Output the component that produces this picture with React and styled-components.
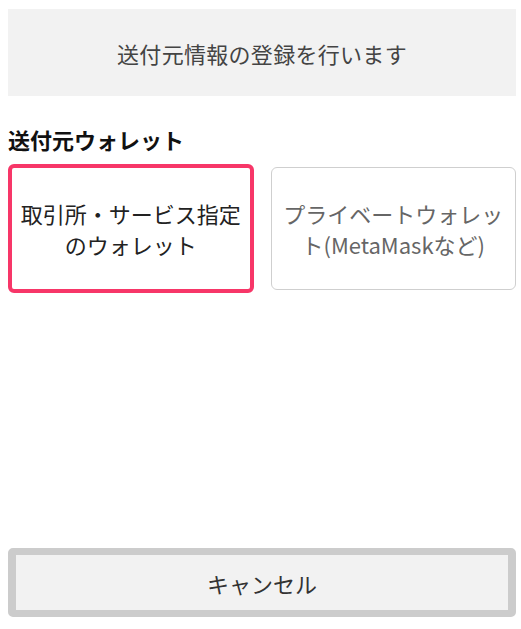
import React from "react";
import styled, { createGlobalStyle } from "styled-components";

const GlobalStyle = createGlobalStyle`
  html, body { margin: 0; padding: 0; background: #ffffff; }
  body { font-family: "Noto Sans CJK JP", "Noto Sans", sans-serif; }
`;

const Page = styled.div`
  min-height: 629px;
  box-sizing: border-box;
  padding: 9px 5px 12px 8px;
  display: flex;
  flex-direction: column;
`;

const Banner = styled.div`
  height: 87px;
  background: #f2f2f2;
  display: flex;
  align-items: center;
  justify-content: center;
  font-size: 22px;
  color: #444444;
  letter-spacing: 0.3px;
`;

const Heading = styled.h2`
  margin: 28px 0 10px;
  font-size: 22px;
  line-height: 30px;
  font-weight: 700;
  color: #111111;
`;

const Options = styled.div`
  display: grid;
  grid-template-columns: 1fr 1fr;
  column-gap: 17px;
  align-items: center;
`;

const Option = styled.button`
  box-sizing: border-box;
  height: ${(p) => (p.$selected ? 129 : 123)}px;
  border: ${(p) => (p.$selected ? "4px solid #f73668" : "1px solid #cfcfcf")};
  border-radius: 6px;
  background: #ffffff;
  color: ${(p) => (p.$selected ? "#222222" : "#666666")};
  font-family: inherit;
  font-size: 22px;
  line-height: 31px;
  white-space: nowrap;
  padding: 0;
  display: flex;
  align-items: center;
  justify-content: center;
  text-align: center;
  cursor: pointer;
`;

const Spacer = styled.div`
  flex: 1;
`;

const CancelButton = styled.button`
  box-sizing: border-box;
  width: 100%;
  height: 69px;
  border: 7px solid #cccccc;
  border-left-width: 8px;
  border-right-width: 8px;
  border-radius: 5px;
  background: #f2f2f2;
  color: #333333;
  font-family: inherit;
  font-size: 22px;
  cursor: pointer;
`;

export default function App() {
  return (
    <>
      <GlobalStyle />
      <Page>
        <Banner>送付元情報の登録を行います</Banner>
        <Heading>送付元ウォレット</Heading>
        <Options>
          <Option $selected>
            <span>
              取引所・サービス指定
              <br />
              のウォレット
            </span>
          </Option>
          <Option>
            <span>
              プライベートウォレッ
              <br />
              ト(MetaMaskなど)
            </span>
          </Option>
        </Options>
        <Spacer />
        <CancelButton>キャンセル</CancelButton>
      </Page>
    </>
  );
}
